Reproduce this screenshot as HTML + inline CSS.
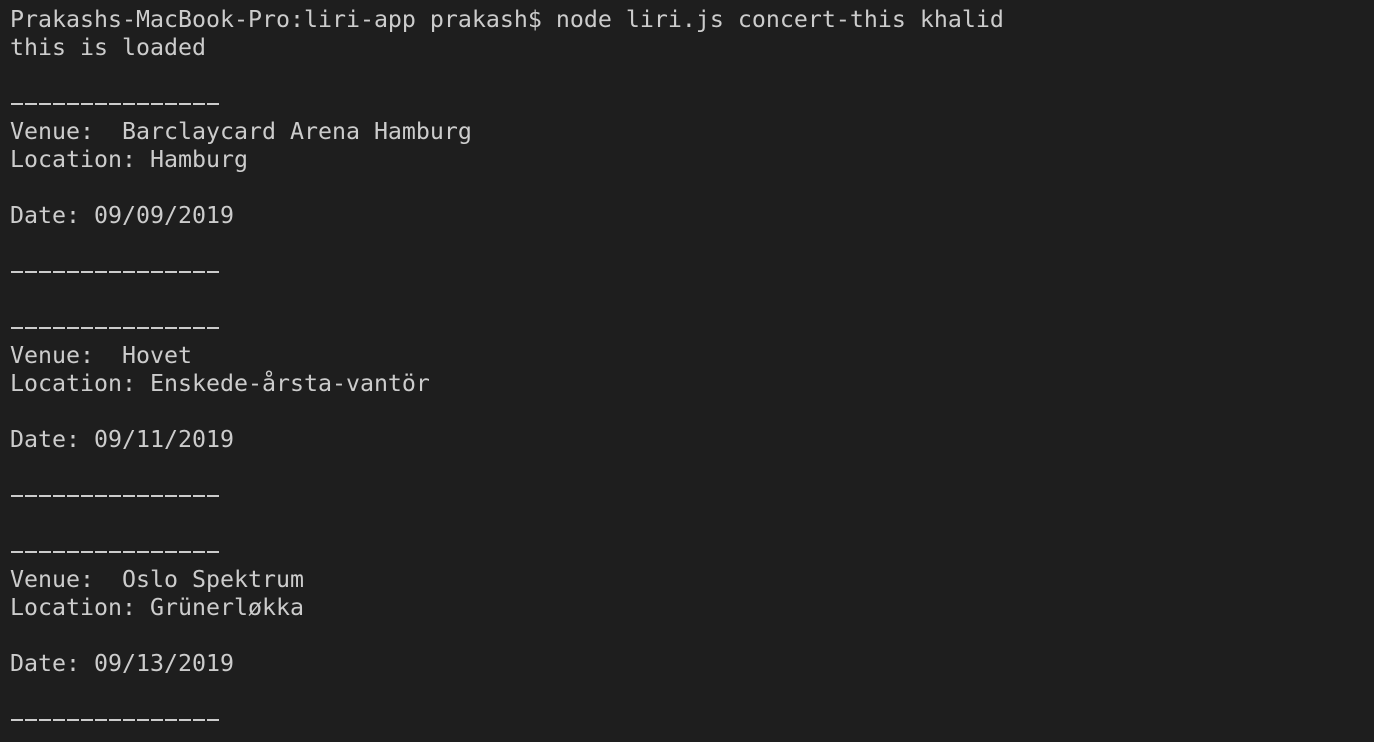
<!DOCTYPE html>
<html><head><meta charset="utf-8"><style>
html,body{margin:0;padding:0;background:#1e1e1e;width:1374px;height:742px;overflow:hidden}
pre{margin:0;position:absolute;left:10px;top:6px;font-family:"DejaVu Sans Mono","Liberation Mono",monospace;font-size:23.25px;line-height:28px;color:#cccccc;white-space:pre}
.d{display:inline-block;width:210px;height:28px;vertical-align:top;background:repeating-linear-gradient(90deg,#cccccc 0 12px,transparent 12px 14px) no-repeat 1px 13px/209px 2px}
</style></head><body><pre>Prakashs-MacBook-Pro:liri-app prakash$ node liri.js concert-this khalid
this is loaded

<span class="d"></span>
Venue:  Barclaycard Arena Hamburg
Location: Hamburg

Date: 09/09/2019

<span class="d"></span>

<span class="d"></span>
Venue:  Hovet
Location: Enskede-årsta-vantör

Date: 09/11/2019

<span class="d"></span>

<span class="d"></span>
Venue:  Oslo Spektrum
Location: Grünerløkka

Date: 09/13/2019

<span class="d"></span></pre></body></html>
